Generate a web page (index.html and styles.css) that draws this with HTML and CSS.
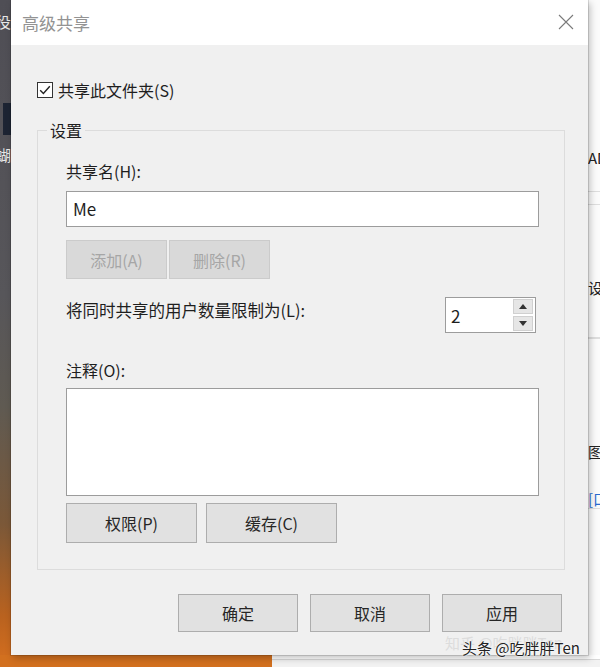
FILE: index.html
```html
<!DOCTYPE html>
<html lang="zh-CN">
<head>
    <meta charset="UTF-8">
    <meta name="viewport" content="width=device-width, initial-scale=1.0">
    <title>高级共享</title>
    <link rel="stylesheet" href="styles.css">
</head>
<body>
    <div class="desk">
        <div class="screen">
            <div class="wall-left">
                <span class="frag frag-top">手役</span>
                <span class="dark-block"></span>
                <span class="frag frag-mid">蝴</span>
            </div>

            <div class="dialog">
                <div class="titlebar">
                    <span class="title">高级共享</span>
                    <svg class="close" width="16" height="16" viewBox="0 0 16 16">
                        <path d="M1 1 L15 15 M15 1 L1 15" stroke="#7a7a7a" stroke-width="1.1" fill="none"/>
                    </svg>
                </div>

                <div class="dialog-body">
                    <label class="check-row">
                        <svg class="checkbox" width="16" height="16" viewBox="0 0 16 16">
                            <rect x="0.5" y="0.5" width="15" height="15" fill="#fff" stroke="#333"/>
                            <path d="M3.2 8.2 L6.4 11.4 L12.8 4.2" stroke="#222" stroke-width="1.4" fill="none"/>
                        </svg>
                        共享此文件夹(S)
                    </label>

                    <fieldset class="settings">
                        <legend>设置</legend>
                        <div class="field-label">共享名(H):</div>
                        <div class="textbox">Me</div>
                        <div class="btn-row">
                            <button class="btn small" disabled>添加(A)</button>
                            <button class="btn small" disabled>删除(R)</button>
                        </div>
                        <div class="limit-row">
                            <span class="limit-label">将同时共享的用户数量限制为(L):</span>
                            <div class="spinner">
                                <span class="spin-value">2</span>
                                <div class="spin-btns">
                                    <span class="spin-btn"><svg width="8" height="5" viewBox="0 0 8 5"><path d="M0 5 L4 0 L8 5 Z" fill="#333"/></svg></span>
                                    <span class="spin-btn"><svg width="8" height="5" viewBox="0 0 8 5"><path d="M0 0 L4 5 L8 0 Z" fill="#333"/></svg></span>
                                </div>
                            </div>
                        </div>
                        <div class="field-label comment-label">注释(O):</div>
                        <div class="textarea"></div>
                        <div class="btn-row btn-row-wide">
                            <button class="btn wide">权限(P)</button>
                            <button class="btn wide">缓存(C)</button>
                        </div>
                    </fieldset>

                    <div class="footer">
                        <button class="btn footer-btn">确定</button>
                        <button class="btn footer-btn">取消</button>
                        <button class="btn footer-btn">应用</button>
                    </div>
                </div>
            </div>

            <div class="wall-right">
                <span class="frag-r r-ad">AD</span>
                <span class="rule"></span>
                <span class="rule"></span>
                <span class="frag-r r-set">设</span>
                <span class="rule"></span>
                <span class="rule"></span>
                <span class="frag-r r-pic">图</span>
                <span class="frag-r r-link">[口</span>
                <span class="rule"></span>
            </div>
        </div>
        <div class="desk-bottom">
            <div class="orange"></div>
            <div class="pale"></div>
        </div>

        <div class="watermark">
            <span class="wm-back">知乎 @吃胖胖Ten</span>
            <span class="wm-front">头条 @吃胖胖Ten</span>
        </div>
    </div>
</body>
</html>
```

FILE: styles.css
```css
body {
    margin: 0;
    font-family: "Noto Sans CJK SC", "Noto Sans", sans-serif;
    color: #1e1e1e;
}
.desk {
    width: 600px;
    height: 667px;
    overflow: hidden;
    position: relative;
    display: flex;
    flex-direction: column;
}
.screen {
    display: flex;
    height: 655px;
}
.wall-left {
    width: 11px;
    overflow: hidden;
    display: flex;
    flex-direction: column;
    align-items: flex-end;
    background: linear-gradient(180deg, #4f4e55 0%, #57565a 45%, #5f5a52 62%, #7b5838 80%, #b9621f 94%, #cf6c1f 100%);
}
.frag {
    color: #e8e8e8;
    font-size: 15px;
    line-height: 16px;
    white-space: nowrap;
}
.frag-top {
    margin-top: 14px;
}
.dark-block {
    width: 8px;
    height: 32px;
    margin-top: 73px;
    background: #1d2433;
}
.frag-mid {
    margin-top: 12px;
}
.dialog {
    width: 577px;
    display: flex;
    flex-direction: column;
    background: #f0f0f0;
    box-shadow: 0 0 0 1px rgba(0, 0, 0, 0.12), 2px 3px 7px rgba(0, 0, 0, 0.25);
    z-index: 1;
}
.titlebar {
    height: 45px;
    background: #fff;
    display: flex;
    align-items: center;
    justify-content: space-between;
    padding: 0 14px 0 11px;
    box-sizing: border-box;
}
.title {
    font-size: 17px;
    color: #939393;
}
.close {
    margin-top: -2px;
}
.dialog-body {
    padding: 35px 23px 23px 26px;
}
.check-row {
    display: flex;
    align-items: center;
    gap: 5px;
    height: 20px;
    font-size: 16px;
    line-height: 20px;
}
.settings {
    margin: 20px 0 0 0;
    padding: 21px 25px 26px 28px;
    border: 1px solid #dcdcdc;
    min-width: 0;
}
.settings legend {
    margin-left: -19px;
    padding: 0 3px;
    font-size: 16px;
    line-height: 20px;
}
.field-label {
    font-size: 16px;
    line-height: 20px;
}
.textbox {
    margin-top: 10px;
    height: 36px;
    box-sizing: border-box;
    border: 1px solid #9c9c9c;
    background: #fff;
    padding-left: 6px;
    font-size: 17px;
    line-height: 34px;
}
.btn {
    font-family: inherit;
    font-size: 16px;
    color: #262626;
    background: #e1e1e1;
    border: 1px solid #adadad;
    padding: 0;
    box-sizing: border-box;
}
.btn:disabled {
    color: #a6a6a6;
    background: #d9d9d9;
    border-color: #cbcbcb;
}
.btn-row {
    display: flex;
    gap: 2px;
    margin-top: 13px;
}
.btn.small {
    width: 101px;
    height: 39px;
}
.limit-row {
    display: flex;
    justify-content: space-between;
    margin-top: 18px;
    margin-right: 3px;
}
.limit-label {
    font-size: 16.5px;
    line-height: 20px;
    margin-top: 3px;
}
.spinner {
    width: 91px;
    height: 36px;
    box-sizing: border-box;
    border: 1px solid #9c9c9c;
    background: #fff;
    display: flex;
    justify-content: space-between;
    padding: 1px 2px 1px 5px;
}
.spin-value {
    font-size: 17px;
    line-height: 33px;
}
.spin-btns {
    width: 20px;
    display: flex;
    flex-direction: column;
    gap: 2px;
}
.spin-btn {
    flex: 1;
    background: #e6e6e6;
    border: 1px solid #d0d0d0;
    display: flex;
    align-items: center;
    justify-content: center;
}
.comment-label {
    margin-top: 27px;
}
.textarea {
    margin-top: 8px;
    height: 108px;
    box-sizing: border-box;
    border: 1px solid #9c9c9c;
    background: #fff;
}
.btn-row-wide {
    gap: 9px;
    margin-top: 7px;
}
.btn.wide {
    width: 131px;
    height: 40px;
}
.footer {
    display: flex;
    justify-content: flex-end;
    gap: 12px;
    margin-top: 24px;
    margin-right: 3px;
}
.footer-btn {
    width: 120px;
    height: 38px;
}
.wall-right {
    flex: 1;
    background: #fbfbfb;
    display: flex;
    flex-direction: column;
    overflow: hidden;
    font-size: 15px;
    line-height: 18px;
}
.frag-r {
    white-space: nowrap;
    color: #222;
}
.rule {
    height: 1px;
    background: #dedede;
}
.r-ad {
    margin-top: 149px;
}
.wall-right .rule:nth-of-type(1) {
    margin-top: 22px;
}
.wall-right .rule:nth-of-type(2) {
    margin-top: 24px;
}
.r-set {
    margin-top: 74px;
}
.wall-right .rule:nth-of-type(3) {
    margin-top: 12px;
}
.wall-right .rule:nth-of-type(4) {
    margin-top: 22px;
}
.r-pic {
    margin-top: 104px;
}
.r-link {
    margin-top: 29px;
    color: #2a6bd0;
}
.wall-right .rule:nth-of-type(5) {
    margin-top: 40px;
}
.desk-bottom {
    flex: 1;
    display: flex;
}
.desk-bottom .orange {
    width: 272px;
    background: #d2701f;
}
.desk-bottom .pale {
    flex: 1;
    background: #f2f2f2;
    border-top: 1px solid #d8d8d8;
    margin-top: 4px;
}
.watermark {
    position: absolute;
    left: 445px;
    top: 636px;
    z-index: 2;
    font-size: 15px;
    line-height: 18px;
    white-space: nowrap;
}
.wm-back {
    position: absolute;
    left: 0;
    top: -2px;
    color: rgba(200, 200, 200, 0.5);
}
.wm-front {
    position: relative;
    left: 17px;
    top: 3px;
    color: #222;
    text-shadow: 0 0 2px #fff, 0 0 2px #fff;
}
```
